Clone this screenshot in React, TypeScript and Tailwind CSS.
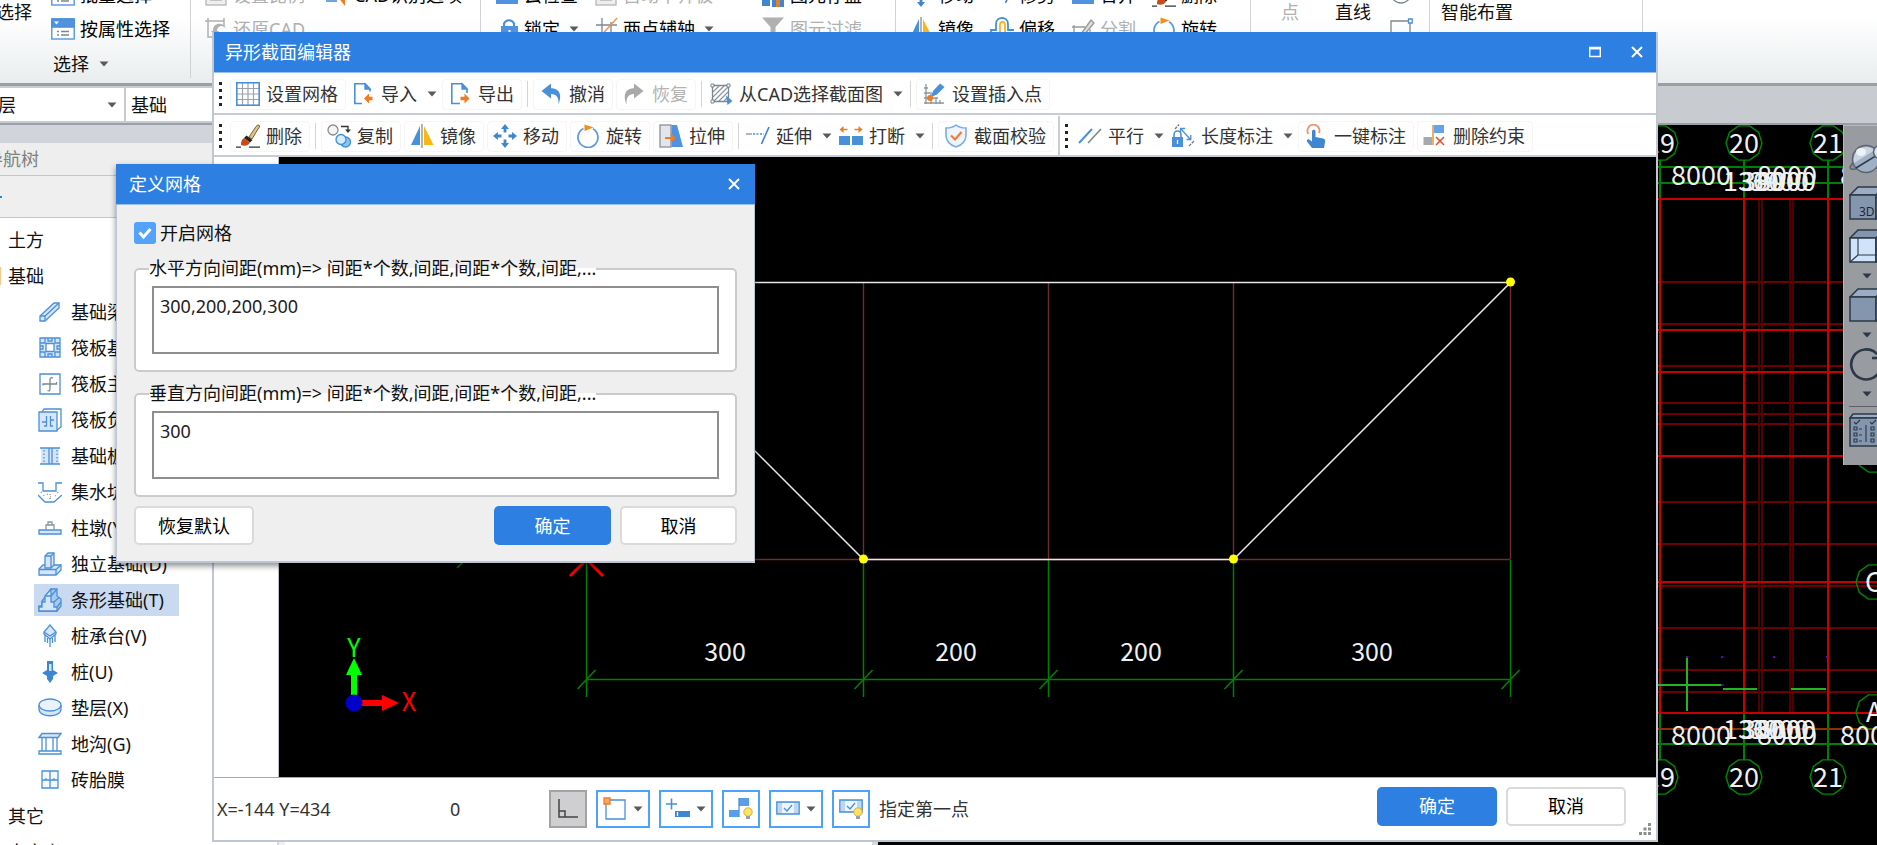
import React from "react";

type Kids = { children?: React.ReactNode };

const BLUE = "#4a90d9";
const ORANGE = "#f07c22";

function Caret({ color = "#5a5a5a" }: { color?: string }) {
  return (
    <svg width="10" height="6" viewBox="0 0 10 6" className="shrink-0" aria-hidden="true">
      <path d="M0.5 0.5H9.5L5 5.5Z" fill={color} />
    </svg>
  );
}

function Ico({ children, size = 24 }: Kids & { size?: number }) {
  return (
    <svg
      width={size}
      height={size}
      viewBox="0 0 24 24"
      fill="none"
      stroke={BLUE}
      strokeWidth="1.3"
      className="shrink-0"
      aria-hidden="true"
    >
      {children}
    </svg>
  );
}

/* ---------- icons ---------- */

const GridIcon = () => (
  <Ico>
    <path d="M6.5 1V23M12 1V23M17.5 1V23M1 6.5H23M1 12H23M1 17.5H23" stroke="#9aa3ad" strokeWidth="1.2" />
    <rect x="0.8" y="0.8" width="22.4" height="22.4" strokeWidth="1.6" />
  </Ico>
);
const ImportIcon = () => (
  <Ico>
    <path d="M11 21.5H3.8V1.8H14L19 7V9.5" strokeWidth="1.6" />
    <path d="M14 1.8V7H19Z" fill={BLUE} />
    <path d="M13 16.5L18 11.5V14.8H21.5V18.2H18V21.5Z" fill={ORANGE} stroke="none" />
  </Ico>
);
const ExportIcon = () => (
  <Ico>
    <path d="M12 21.5H3.8V1.8H14L19 7V11" strokeWidth="1.6" />
    <path d="M14 1.8V7H19Z" fill={BLUE} />
    <path d="M21.5 16.5L16.5 11.5V14.8H12.5V18.2H16.5V21.5Z" fill={ORANGE} stroke="none" />
  </Ico>
);
const UndoIcon = () => (
  <Ico>
    <path d="M2.5 9L12 1.5V6.2C19 6.2 24 11 19.5 22.5C20 15.5 17.5 12 12 12V16.5Z" fill={BLUE} stroke="none" />
  </Ico>
);
const RedoIcon = () => (
  <Ico>
    <path d="M21.5 9L12 1.5V6.2C5 6.2 0 11 4.5 22.5C4 15.5 6.5 12 12 12V16.5Z" fill="#a9a9a9" stroke="none" />
  </Ico>
);
const HatchIcon = () => (
  <Ico>
    <path d="M4 10L10 4M4 15L15 4M5 19L19 5M10 19L19 10M15 19L19 15" stroke="#8b959f" strokeWidth="1.2" />
    <path d="M3.5 3.5H19.5V19.5H3.5Z" stroke="#7b8792" />
    <path d="M2 2H5V5H2ZM18 2H21V5H18ZM2 18H5V21H2Z" fill="#fff" stroke="#7b8792" strokeWidth="1" />
    <path d="M17 13.5L23.5 19L18.5 23Z" fill={BLUE} stroke="none" />
  </Ico>
);
const InsertPointIcon = () => (
  <Ico>
    <path d="M4 2V22M9 10V22M14 16V22M18 18V22M2 6H6M2 11H8M2 16H16M2 21H22" stroke="#8b959f" />
    <path d="M9 15L11 9L18 1.5L22.5 5L15 12.5Z" fill={BLUE} stroke="none" />
    <circle cx="8" cy="16" r="3" fill={ORANGE} stroke="none" />
  </Ico>
);
const BrushIcon = () => (
  <Ico>
    <path d="M13 13L20 2.5Q22 0 23.5 1.5Q24 3 22 5L16 15Z" fill="#dcc48b" stroke="#7d6332" strokeWidth="1" />
    <path d="M10.5 11.5L16.5 16L14 18.5L8 14Z" fill="#222" stroke="none" />
    <path d="M8 14L14 18.5C12 22 8 22.5 5 21C5 18 5.5 15.5 8 14Z" fill="#c94a17" stroke="none" />
    <path d="M0 23.2H5M13 23.2H24" stroke="#333" />
  </Ico>
);
const CopyIcon = () => (
  <Ico>
    <circle cx="6" cy="6" r="5" stroke="#8b8b8b" fill="#f4f4f4" />
    <path d="M14 2.5H21V6" stroke="#333" />
    <path d="M18 5.5H24L21 9Z" fill="#333" stroke="none" />
    <circle cx="18.5" cy="18" r="5" stroke="#3a8fd6" fill="#8cc4ef" />
    <circle cx="14" cy="15.5" r="5" stroke="#3a8fd6" fill="#d7ecfb" />
  </Ico>
);
const MirrorIcon = () => (
  <Ico>
    <path d="M10 2V21H1Z" fill={BLUE} stroke="none" />
    <path d="M14 2V21H23.5Z" fill="#fbb515" stroke="none" />
    <path d="M12 0V24" stroke="#8b8b8b" />
  </Ico>
);
const MoveIcon = () => (
  <Ico>
    <path
      d="M12 0L16 5H13.4V8.5H10.6V5H8ZM12 24L8 19H10.6V15.5H13.4V19H16ZM0 12L5 8V10.6H8.5V13.4H5V16ZM24 12L19 16V13.4H15.5V10.6H19V8Z"
      fill="#3f86d2"
      stroke="none"
    />
  </Ico>
);
const RotateIcon = () => (
  <Ico>
    <path d="M7.5 4.5A10 10 0 1 0 17 4.8" stroke="#5c9de2" strokeWidth="1.8" />
    <path d="M8.5 0.5L17.5 3.5L8.5 7Z" fill="#f28c1e" stroke="none" />
  </Ico>
);
const StretchIcon = () => (
  <Ico>
    <rect x="1" y="1" width="11" height="22" fill="#e4e5ea" stroke="#8a8f98" />
    <path d="M12.5 1H18L24 23H12.5Z" fill="#4f93e0" stroke="none" />
    <path d="M6 14H15M12 10.5L15.5 14L12 17.5" stroke={ORANGE} strokeWidth="1.8" />
  </Ico>
);
const ExtendIcon = () => (
  <Ico>
    <path d="M0 10H6" stroke="#8b8b8b" />
    <path d="M7 10H18" strokeDasharray="2 1.5" />
    <path d="M15.5 20L23 3" stroke="#3f7fd0" strokeWidth="1.6" />
  </Ico>
);
const BreakIcon = () => (
  <Ico>
    <path d="M0 12H11V21H0ZM13 12H24V21H13Z" fill={BLUE} stroke="none" />
    <path d="M0.5 5.5L4.5 2V9ZM23.5 5.5L19.5 2V9Z" fill={ORANGE} stroke="none" />
    <path d="M4 5.5H8.5M20 5.5H15.5" stroke={ORANGE} strokeWidth="1.6" />
  </Ico>
);
const ShieldIcon = () => (
  <Ico>
    <path d="M12 1C15 3.5 18.5 4 22 4V11C22 17 18 21 12 23C6 21 2 17 2 11V4C5.5 4 9 3.5 12 1Z" fill="#eef5fd" stroke="#78aee6" strokeWidth="1.6" />
    <path d="M7 11.5L11 15.5L17.5 8" stroke="#f0793c" strokeWidth="2.2" />
  </Ico>
);
const ParallelIcon = () => (
  <Ico>
    <path d="M1 19L14 5" strokeWidth="2" />
    <path d="M10 19L23 5" stroke="#7d868f" strokeWidth="1.6" />
  </Ico>
);
const LengthIcon = () => (
  <Ico>
    <path d="M3 13V10.5A3.5 3.5 0 0 1 10 10.5V13" strokeWidth="1.6" />
    <path d="M1 13H12V23H1Z" fill={BLUE} stroke="none" />
    <path d="M6.5 16V20" stroke="#fff" />
    <path d="M10 5L19 15M9.5 9V4.5H14M15.5 15.5H19.8V11" />
    <path d="M4 5L8 0.5M18 22L23 17" stroke="#777" strokeDasharray="3 1" />
  </Ico>
);
const TouchIcon = () => (
  <Ico>
    <path d="M4.5 10A6 6 0 1 1 15 9" stroke="#f2926a" strokeWidth="1.8" />
    <path d="M8 7.5C8 5.3 11.5 5.3 11.5 7.5V13L19 14.5C21 15 21.5 16 21 18L20 24H8L3 17.5C2 15.5 4.5 14.5 6 16L8 17.5Z" fill="#3f86d2" stroke="none" />
  </Ico>
);
const RemoveConstraintIcon = () => (
  <Ico>
    <path d="M0.5 13H9V21H0.5Z" fill="#a4a8b0" stroke="none" />
    <path d="M11 1H21V9H11Z" fill="#64a3ea" stroke="none" />
    <path d="M10 1V21" stroke="#e89a3c" strokeWidth="1.6" />
    <path d="M13 13L21 21M21 13L13 21" stroke="#e0492c" strokeWidth="1.5" />
  </Ico>
);
const PropSelectIcon = () => (
  <Ico>
    <rect x="0.8" y="2" width="22.4" height="20" fill="#fff" />
    <path d="M0.8 2H23.2V10H0.8Z" fill="#4f93e0" />
    <path d="M3 4.5H8L5.5 7.5Z" fill="#fff" stroke="none" />
    <path d="M6 14.5H8M10 14.5H18M6 18H8M10 18H18" stroke="#7d868f" />
  </Ico>
);
const GrayBoxIcon = () => (
  <Ico>
    <rect x="2" y="2" width="20" height="20" stroke="#b5b5b5" fill="#eee" />
    <path d="M6 17H18M6 12H18" stroke="#b5b5b5" />
  </Ico>
);
const RestoreCadIcon = () => (
  <Ico>
    <path d="M4 1V20H23M1 4H20V9M20 1V4" stroke="#b0b0b0" strokeWidth="1.5" />
    <path d="M7 14L12 20L15 14H13C13 11 15 9 18 9L22 11C19 5 9 5 9 14Z" fill="#b0b0b0" stroke="none" />
  </Ico>
);
const ArrowIcon = () => (
  <Ico>
    <path d="M1 18H12" strokeWidth="1.6" />
    <path d="M12 13H20V23Z" fill={ORANGE} stroke="none" />
  </Ico>
);
const LockIcon = () => (
  <Ico>
    <path d="M9 10V6.5A5.5 5.5 0 0 1 19 6.5V10" strokeWidth="2" />
    <path d="M6 9H23V24H6Z" fill="#4f93e0" stroke="none" />
    <path d="M14.5 13V18" stroke="#fff" strokeWidth="2" />
  </Ico>
);
const AxisIcon = () => (
  <Ico>
    <path d="M8 1V23M17 5V23M2 8H23M2 17H23" stroke="#7d868f" />
    <path d="M4 22L23 1" stroke="#f0904c" />
  </Ico>
);
const FunnelIcon = () => (
  <Ico>
    <path d="M1 0.5H23L14.5 10V22H9.5V10Z" fill="#b0b0b0" stroke="none" />
  </Ico>
);
const SaveIcon = () => (
  <Ico>
    <path d="M1 16H9V23H1ZM11 12H23V24H11Z" fill="#3f86d2" stroke="none" />
    <path d="M15 16H19V24H15Z" fill={ORANGE} stroke="none" />
  </Ico>
);
const BarIcon = () => (
  <Ico>
    <path d="M1 17H23V21H1Z" fill="#4f93e0" stroke="none" />
  </Ico>
);
const OffsetIcon = () => (
  <Ico>
    <path d="M1 20V13H6V7C6 -1 18 -1 18 7V13H24" strokeWidth="1.8" />
    <path d="M5 21V17H10V8C10 4 15 4 15 8V17H22" stroke="#f6b32b" strokeWidth="1.8" />
  </Ico>
);
const SplitIcon = () => (
  <Ico>
    <path d="M3 8V22M1 10H14M3 17H23M19 12V22" stroke="#999" />
    <path d="M10 17L20 3L23 6L13 18Z" stroke="#999" fill="#ddd" />
  </Ico>
);
const RectIcon = () => (
  <Ico>
    <path d="M2 4H21V22H2Z" stroke="#7d868f" />
    <path d="M19.5 2H23.2V6H19.5Z" fill="#fff" />
  </Ico>
);
const CircleIcon = () => (
  <Ico>
    <circle cx="12" cy="10" r="10" stroke="#7d868f" />
  </Ico>
);

/* ---------- tree icons ---------- */

const LB = "#d6e6f8";
const BeamIcon = () => (
  <Ico>
    <path d="M2 16L16 3H21V8L7 21H2Z" fill={LB} />
    <path d="M2 16H7V21M7 16L21 3" />
  </Ico>
);
const RaftIcon = () => (
  <Ico>
    <path d="M2 2H22V21H2Z" fill={LB} />
    <path d="M8 7.5H16V15.5H8Z" fill="#fff" />
    <path d="M2 7H7V2M17 2V7H22M2 16H7V21M22 16H17V21M10 2V5H14V2M10 21V18H14V21M2 10H5V13H2M22 10H19V13H22" />
  </Ico>
);
const RaftMainIcon = () => (
  <Ico>
    <path d="M2 2H22V22H2Z" fill="#fff" />
    <path d="M5 13.5V12H18.5V10M15 6Q12 5 12 8V17Q12 19.5 9.5 18.5" stroke="#7b8792" />
  </Ico>
);
const RaftNegIcon = () => (
  <Ico>
    <path d="M4 4L6 1H23V19L19 22" />
    <path d="M1 4H19V23H1Z" fill={LB} />
    <path d="M8.5 8V18H6M12.5 8V18H15M4 14H8M13 12H16" />
  </Ico>
);
const StripIcon = () => (
  <Ico>
    <path d="M3 4H21V20H3Z" fill={LB} stroke="none" />
    <path d="M2 4H22M2 20H22M11 4V20M14 4V20" />
    <path d="M6 6V19M19 6V19" strokeDasharray="1.5 2" />
  </Ico>
);
const SumpIcon = () => (
  <Ico>
    <path d="M0 3H5V11H18V3H24M0 15L7 22H16L24 15" />
    <path d="M3 12L8 18M12 14V20M20 12L16 18M9 14L15 19" stroke="#8b959f" strokeDasharray="1 3" />
  </Ico>
);
const PierIcon = () => (
  <Ico>
    <path d="M1 14H23V18H1Z" fill={LB} />
    <path d="M8 14V9H16V14M10 9V6H14V9" stroke="#8b959f" />
  </Ico>
);
const FootingIcon = () => (
  <Ico>
    <path d="M1 17L5 13H23V18L18 23H1Z" fill={LB} />
    <path d="M1 17.5H18V23M18 17.5L23 13" />
    <path d="M7 16V4L10 1H16V13L13 16Z" fill={LB} />
    <path d="M7 4H13V16M13 4L16 1" />
  </Ico>
);
const StripFootingIcon = () => (
  <Ico>
    <path d="M1 23V18H4V13L13 1H19V8L23 11V18L19 23Z" fill="#a8caf0" />
    <path d="M1 23V19H4V14H7V8L13 1L13 8V14H16V19H19V23Z" fill={LB} />
    <path d="M7 8H13L19 1M16 14L21 9.5M19 19L23 14" />
  </Ico>
);
const PileCapIcon = () => (
  <Ico>
    <path d="M12 1L18 8V10L12 15L6 10V8Z" fill={LB} />
    <path d="M6 8L12 12L18 8M12 15V23M7 11V18M17 11V18M9.5 14V19M14.5 14V19" />
  </Ico>
);
const PileIcon = () => (
  <Ico>
    <path d="M9 1H15V10L20 13L15 16V19L12 23L9 19V16L4 13L9 10Z" fill="#3f86d2" stroke="none" />
    <path d="M11 4H13.5V11H11Z" fill={LB} stroke="none" />
  </Ico>
);
const PadIcon = () => (
  <Ico>
    <path d="M1 9V13C1 22 23 22 23 13V9" fill={LB} />
    <ellipse cx="12" cy="9" rx="11" ry="6" fill="#eaf2fc" />
  </Ico>
);
const TrenchIcon = () => (
  <Ico>
    <path d="M1 5.5L4 1.5H23L20 5.5Z" fill={LB} />
    <path d="M1 19H23V22H1ZM4 6V19M8 6V19M15 6V19M19 6V19" />
  </Ico>
);
const BrickIcon = () => (
  <Ico>
    <path d="M4 3H20V20H4Z" fill="#f4f9ff" />
    <path d="M12 3V20M4 12H20M8 10V12M16 10V12" />
  </Ico>
);

/* ---------- ribbon ---------- */

function RibbonItem({
  icon,
  label,
  disabled,
  caret,
}: {
  icon?: React.ReactNode;
  label: string;
  disabled?: boolean;
  caret?: boolean;
}) {
  return (
    <button
      type="button"
      disabled={disabled}
      className="flex h-[34px] shrink-0 items-center gap-[5px] whitespace-nowrap text-black disabled:text-[#b0b0b0]"
    >
      {icon}
      <span>{label}</span>
      {caret && (
        <span className="pl-1">
          <Caret />
        </span>
      )}
    </button>
  );
}

function RibbonCol({ children, className = "" }: Kids & { className?: string }) {
  return <div className={"-mt-[22px] flex flex-col items-start " + className}>{children}</div>;
}

function Ribbon() {
  return (
    <header className="flex h-[86px] shrink-0 items-start overflow-hidden border-b-[3px] border-[#9b9fa5] bg-linear-to-b from-white from-20% to-[#e9edee]">
      <div className="flex h-[78px] w-[191px] shrink-0 border-r border-[#cfd3d6]">
        <button type="button" className="-ml-1 mr-[19px] h-6 whitespace-nowrap">
          选择
        </button>
        <RibbonCol>
          <RibbonItem icon={<PropSelectIcon />} label="批量选择" />
          <RibbonItem icon={<PropSelectIcon />} label="按属性选择" />
          <button type="button" className="flex h-9 shrink-0 items-center gap-[10px] pl-[2px]">
            选择 <Caret />
          </button>
        </RibbonCol>
      </div>
      <div className="flex h-[78px] w-[290px] shrink-0 border-r border-[#cfd3d6] pl-[13px]">
        <RibbonCol className="w-[121px]">
          <RibbonItem icon={<GrayBoxIcon />} label="设置比例" disabled />
          <RibbonItem icon={<RestoreCadIcon />} label="还原CAD" disabled />
        </RibbonCol>
        <RibbonCol>
          <RibbonItem icon={<ArrowIcon />} label="CAD识别选项" />
        </RibbonCol>
      </div>
      <div className="flex h-[78px] w-[415px] shrink-0 border-r border-[#cfd3d6] pl-[14px]">
        <RibbonCol className="w-[99px]">
          <RibbonItem icon={<BarIcon />} label="云检查" />
          <RibbonItem icon={<LockIcon />} label="锁定" caret />
        </RibbonCol>
        <RibbonCol className="w-[167px]">
          <RibbonItem icon={<GrayBoxIcon />} label="自动平齐板" disabled />
          <RibbonItem icon={<AxisIcon />} label="两点辅轴" caret />
        </RibbonCol>
        <RibbonCol>
          <RibbonItem icon={<SaveIcon />} label="图元存盘" />
          <RibbonItem icon={<FunnelIcon />} label="图元过滤" disabled />
        </RibbonCol>
      </div>
      <div className="flex h-[78px] w-[355px] shrink-0 border-r border-[#cfd3d6] pl-[13px]">
        <RibbonCol className="w-[81px]">
          <RibbonItem icon={<MoveIcon />} label="移动" />
          <RibbonItem icon={<MirrorIcon />} label="镜像" />
        </RibbonCol>
        <RibbonCol className="w-[81px]">
          <RibbonItem icon={<ExtendIcon />} label="修剪" />
          <RibbonItem icon={<OffsetIcon />} label="偏移" />
        </RibbonCol>
        <RibbonCol className="w-[81px]">
          <RibbonItem icon={<BarIcon />} label="合并" />
          <RibbonItem icon={<SplitIcon />} label="分割" disabled />
        </RibbonCol>
        <RibbonCol>
          <RibbonItem icon={<BrushIcon />} label="删除" />
          <RibbonItem icon={<RotateIcon />} label="旋转" />
        </RibbonCol>
      </div>
      <div className="flex h-[78px] w-[179px] shrink-0 border-r border-[#cfd3d6] pl-[30px]">
        <button type="button" disabled className="h-6 w-[54px] text-left text-[#b0b0b0]">
          点
        </button>
        <button type="button" className="h-6 w-[54px] text-left">
          直线
        </button>
        <RibbonCol>
          <button type="button" aria-label="圆" className="flex h-[34px] items-center">
            <CircleIcon />
          </button>
          <button type="button" aria-label="矩形" className="flex h-[34px] items-center">
            <RectIcon />
          </button>
        </RibbonCol>
      </div>
      <div className="flex h-[78px] w-[213px] shrink-0 border-r border-[#cfd3d6] pl-[11px]">
        <button type="button" className="h-6 whitespace-nowrap">
          智能布置
        </button>
      </div>
    </header>
  );
}

/* ---------- navigation tree ---------- */

const treeItems: { label: string; icon: React.ReactNode; selected?: boolean }[] = [
  { label: "基础梁", icon: <BeamIcon /> },
  { label: "筏板基础", icon: <RaftIcon /> },
  { label: "筏板主筋", icon: <RaftMainIcon /> },
  { label: "筏板负筋", icon: <RaftNegIcon /> },
  { label: "基础板带", icon: <StripIcon /> },
  { label: "集水坑", icon: <SumpIcon /> },
  { label: "柱墩(Y)", icon: <PierIcon /> },
  { label: "独立基础(D)", icon: <FootingIcon /> },
  { label: "条形基础(T)", icon: <StripFootingIcon />, selected: true },
  { label: "桩承台(V)", icon: <PileCapIcon /> },
  { label: "桩(U)", icon: <PileIcon /> },
  { label: "垫层(X)", icon: <PadIcon /> },
  { label: "地沟(G)", icon: <TrenchIcon /> },
  { label: "砖胎膜", icon: <BrickIcon /> },
];

function NavTree() {
  return (
    <nav className="flex w-[279px] shrink-0 flex-col overflow-hidden border-r-2 border-[#d5d8dc] bg-white">
      <div className="h-[18px] shrink-0 bg-[#d1d4da]" />
      <h2 className="-ml-[15px] flex h-8 shrink-0 items-center bg-[#eeeeee] text-[#808080]">导航树</h2>
      <div className="flex h-[43px] shrink-0 items-center border-y border-[#c3c6ca] bg-[#efefef]">
        <span className="h-[2px] w-[2px] bg-[#2d7fe1]" />
      </div>
      <ul className="pt-1">
        <li className="flex h-9 items-center pl-2">土方</li>
        <li className="flex h-9 items-center">
          <span className="h-[18px] w-px bg-[#f5c98b]" />
          <span className="pl-[7px]">基础</span>
        </li>
        {treeItems.map((t) => (
          <li key={t.label} className="flex h-9 items-center pl-[34px]">
            <button
              type="button"
              className={
                "flex h-8 items-center gap-[9px] whitespace-nowrap pl-1 " +
                (t.selected ? "w-[145px] bg-[#c9d9ef]" : "")
              }
            >
              {t.icon}
              {t.label}
            </button>
          </li>
        ))}
        <li className="flex h-9 items-center pl-2">其它</li>
        <li className="flex h-9 items-center pl-2">自定义</li>
      </ul>
    </nav>
  );
}

/* ---------- plan view ---------- */

const axes = [
  { x: 1660, n: "19" },
  { x: 1744, n: "20" },
  { x: 1828, n: "21" },
];
const dimYs = [282, 324, 366, 403, 414, 424, 502, 544, 586, 628, 670, 692];
const brightYs = [199, 330, 372, 456, 582, 713];

function Bubble({ x, y, r = 18 }: { x: number; y: number; r?: number }) {
  const pts = Array.from({ length: 10 }, (_, i) => {
    const a = (i * Math.PI) / 5;
    return `${(x + r * Math.cos(a)).toFixed(1)},${(y + r * Math.sin(a)).toFixed(1)}`;
  }).join(" ");
  return <polygon points={pts} stroke="#008a00" strokeWidth="1.4" fill="none" />;
}

function PlanView() {
  return (
    <svg
      className="absolute inset-0 h-full w-full"
      viewBox="878 125 999 720"
      preserveAspectRatio="xMaxYMin slice"
      aria-label="轴网平面"
    >
      <g stroke="#008000" strokeWidth="2">
        <path d="M1640 167H1843M1640 183H1843M1640 744H1877" />
        <path d="M1660 160V199M1744 160V199M1828 160V199M1660 713V760M1744 713V760M1828 713V760" />
      </g>
      <path d="M1640 729H1877" stroke="#8a3300" strokeWidth="2" />
      <g stroke="#6e0000" strokeWidth="2">
        {dimYs.map((y) => (
          <path key={y} d={`M1640 ${y}H1877`} />
        ))}
      </g>
      <path d="M1759 199V713M1762 199V713M1790 199V713M1793 199V713" stroke="#500000" strokeWidth="2" />
      <g stroke="#c80000" strokeWidth="2">
        {brightYs.map((y) => (
          <path key={y} d={`M1640 ${y}H1877`} />
        ))}
        {axes.map((a) => (
          <path key={a.x} d={`M${a.x} 199V713`} />
        ))}
      </g>
      <g stroke="#22b422" strokeWidth="2">
        <path d="M1640 685H1721M1687 658V711M1723 689H1757M1791 689H1826" />
      </g>
      <path d="M1686 657H1688M1721 657H1723M1773 657H1775M1826 657H1828M1721 685H1723" stroke="#6a00c8" strokeWidth="2" />
      {axes.map((a) => (
        <g key={a.n}>
          <Bubble x={a.x} y={143} />
          <Bubble x={a.x} y={777} />
        </g>
      ))}
      <Bubble x={1874} y={455} />
      <Bubble x={1874} y={582} />
      <Bubble x={1874} y={712} />
      <g fill="#f0f0f0" className="text-[27px] [font-family:'Noto_Sans_CJK_SC',sans-serif]">
        {axes.map((a) => (
          <React.Fragment key={a.n}>
            <text x={a.x} y={153} textAnchor="middle">
              {a.n}
            </text>
            <text x={a.x} y={787} textAnchor="middle">
              {a.n}
            </text>
          </React.Fragment>
        ))}
        <text x={1671} y={185}>8000</text>
        <text x={1757} y={185}>8000</text>
        <text x={1840} y={185}>8000</text>
        <text x={1723} y={191}>1300</text>
        <text x={1741} y={191}>3800</text>
        <text x={1749} y={191}>3900</text>
        <text x={1756} y={191}>3000</text>
        <text x={1671} y={745}>8000</text>
        <text x={1757} y={745}>8000</text>
        <text x={1840} y={745}>8000</text>
        <text x={1723} y={739}>1300</text>
        <text x={1741} y={739}>3800</text>
        <text x={1749} y={739}>3900</text>
        <text x={1756} y={739}>3000</text>
        <text x={1865} y={592}>C</text>
        <text x={1866} y={722}>A</text>
      </g>
    </svg>
  );
}

function ViewButton({ label, children }: Kids & { label: string }) {
  return (
    <button type="button" aria-label={label} className="block h-[34px] overflow-hidden">
      <svg width="44" height="34" viewBox="0 0 44 34" fill="#8496ad" stroke="#2c3848" strokeWidth="1.5" aria-hidden="true">
        {children}
      </svg>
    </button>
  );
}

function ViewCaret() {
  return (
    <span className="flex h-[25px] items-center pl-[13px]">
      <Caret color="#2c3848" />
    </span>
  );
}

function ViewBar() {
  return (
    <div className="absolute right-0 top-0 flex h-[340px] w-[34px] flex-col items-start overflow-hidden border-l border-t border-[#b5b8bc] bg-[#989b9f] pl-[5px] pt-[17px]">
      <ViewButton label="三维观察">
        <path d="M5 18L1 24Q1 27 6 26L12 24" fill="#8b929b" stroke="#5b6470" />
        <circle cx="17" cy="16" r="13.5" fill="#9fb0c5" stroke="#5b6470" />
        <path d="M5 20A13 13 0 0 1 26 7Z" fill="#c9d5e3" stroke="none" />
        <ellipse cx="12" cy="9" rx="5" ry="4" fill="#eef3f8" stroke="none" />
        <path d="M7 25L30 11" />
        <circle cx="31" cy="9" r="6.5" fill="#dbe3ec" stroke="#5b6470" />
      </ViewButton>
      <span className="h-[9px]" />
      <ViewButton label="三维">
        <path d="M1 9L9 1H36L27 9Z" fill="#9badc2" />
        <path d="M1 9H27V33H1Z" />
        <path d="M27 9L36 1V25L27 33Z" />
        <text x="10" y="30" className="text-[12px]" fill="#1d2733" stroke="none">
          3D
        </text>
      </ViewButton>
      <span className="h-[9px]" />
      <ViewButton label="线框">
        <path d="M1 9L9 1H36L27 9Z" />
        <path d="M1 9H27V33H1Z" fill="#cfe4fb" />
        <path d="M27 9L36 1V25L27 33Z" fill="#cfe4fb" />
        <path d="M9 9V26H36M9 26L1 33M27 9V33" fill="none" strokeWidth="1.1" />
      </ViewButton>
      <ViewCaret />
      <ViewButton label="实体">
        <path d="M1 9L9 1H36L27 9Z" fill="#9badc2" />
        <path d="M1 9H27V33H1Z" />
        <path d="M27 9L36 1V25L27 33Z" />
      </ViewButton>
      <ViewCaret />
      <ViewButton label="旋转视图">
        <path d="M28 7A15 15 0 1 0 32 20" fill="none" strokeWidth="2.6" />
        <path d="M23 11H31V3" fill="none" strokeWidth="2.4" />
      </ViewButton>
      <ViewCaret />
      <span className="mb-[6px] h-px w-full bg-[#5c6066]" />
      <ViewButton label="显示设置">
        <path d="M1 5L4 1H40V5Z" fill="#9badc2" />
        <path d="M1 5H40V33H1Z" />
        <path
          d="M5 9L7 11L11 7M5 14H8V17H5ZM5 20H8V23H5ZM5 26H8V29H5ZM10 16H13M10 22H13M10 28H13M17 12V29M21 9L23 11L27 7M22 14H25V17H22ZM22 20H25V23H22ZM22 26H25V29H22Z"
          fill="none"
          strokeWidth="1.1"
        />
      </ViewButton>
    </div>
  );
}

/* ---------- section editor ---------- */

function Tool({ icon, label, disabled }: { icon: React.ReactNode; label: string; disabled?: boolean }) {
  return (
    <button
      type="button"
      disabled={disabled}
      className="flex h-[31px] items-center gap-[6px] whitespace-nowrap rounded border border-[#f5f5f5] pl-[5px] pr-[7px] text-[#333] disabled:text-[#b3b3b3]"
    >
      {icon}
      {label}
    </button>
  );
}

function DropTool({ icon, label }: { icon: React.ReactNode; label: string }) {
  return (
    <button type="button" className="flex h-[31px] items-center gap-[6px] whitespace-nowrap px-[2px] text-[#333]">
      {icon}
      {label}
      <span className="pl-1">
        <Caret />
      </span>
    </button>
  );
}

const Sep = () => <span className="mx-[2px] h-[26px] w-px bg-[#d4d4d4]" />;

function Grip() {
  return (
    <span className="mx-[5px] flex flex-col gap-[4px]">
      <i className="h-[3px] w-[3px] bg-[#222]" />
      <i className="h-[3px] w-[3px] bg-[#222]" />
      <i className="h-[3px] w-[3px] bg-[#222]" />
      <i className="h-[3px] w-[3px] bg-[#222]" />
    </span>
  );
}

const stations = [586.5, 863.5, 1048.5, 1233.5, 1510.5];
const spans = [
  { x: 725, t: "300" },
  { x: 956, t: "200" },
  { x: 1141, t: "200" },
  { x: 1372, t: "300" },
];

function SectionCanvas() {
  return (
    <svg className="absolute inset-0 h-full w-full" viewBox="279 157 1377 620" preserveAspectRatio="xMidYMid slice" aria-label="截面图">
      <g stroke="#6e2c2c" strokeWidth="1.4">
        <path d="M586.5 559.5H1510.5" />
        {stations.map((x) => (
          <path key={x} d={`M${x} 282V559`} />
        ))}
      </g>
      <g stroke="#008000" strokeWidth="1.5">
        <path d="M586.5 679.5H1510.5M457 568L475 550" />
        {stations.map((x) => (
          <path key={x} d={`M${x} 560V697M${x - 9} 689L${x + 9} 670`} />
        ))}
      </g>
      <path d="M586.5 282.5H1510.5L1233.5 559.5H863.5Z" fill="none" stroke="#e8e8e8" strokeWidth="1.5" />
      <path d="M570 576L603 543M603 576L570 543" stroke="#f00000" strokeWidth="3" />
      <g fill="#ffff00">
        <circle cx="863.5" cy="559" r="4.5" />
        <circle cx="1233.5" cy="559" r="4.5" />
        <circle cx="1510.5" cy="282" r="4.5" />
      </g>
      <g fill="#f0f0f0" textAnchor="middle" className="text-[25px] [font-family:'Noto_Sans_CJK_SC',sans-serif]">
        {spans.map((s) => (
          <text key={s.x} x={s.x} y={661}>
            {s.t}
          </text>
        ))}
        <text x="354" y="657" fill="#00ff00">
          Y
        </text>
        <text x="409" y="711" fill="#ff0000">
          X
        </text>
      </g>
      <path d="M351 703V675H346L354 658L362 675H357V703Z" fill="#00ff00" />
      <path d="M354 700H382V695L399 703L382 711V706H354Z" fill="#ff0000" />
      <circle cx="354" cy="703" r="8.5" fill="#0000c8" />
    </svg>
  );
}

function StatusButton({ label, children, caret, active }: Kids & { label: string; caret?: boolean; active?: boolean }) {
  return (
    <button
      type="button"
      aria-label={label}
      className={
        "flex h-[38px] items-center gap-[6px] border-2 px-[5px] " +
        (active ? "border-[#a3a3a3] bg-[#cfcfd1]" : "border-[#4ba3fb] bg-white")
      }
    >
      <Ico>{children}</Ico>
      {caret && <Caret />}
    </button>
  );
}

const Bulb = () => (
  <>
    <circle cx="19" cy="15" r="4.2" fill="#fde36b" stroke="#e0ae25" strokeWidth="1" />
    <path d="M17 19H21V22H17Z" fill="#9aa0a6" stroke="none" />
  </>
);

const primaryBtn = "h-[39px] rounded-[5px] bg-[#2d7fe1] text-white";
const plainBtn = "h-[39px] rounded-[5px] border-2 border-[#dadada] bg-white text-black";

function SectionEditor() {
  return (
    <section className="absolute bottom-[3px] left-[212px] right-[219px] top-8 flex flex-col overflow-hidden border-x-2 border-b-2 border-[#c0c7d3] bg-white">
      <div className="-mx-[2px] flex h-[41px] shrink-0 items-center border-b border-[#9cbfe9] bg-[#2d7fe1] pl-[13px] pr-[15px] text-white">
        <h1 className="flex-1">异形截面编辑器</h1>
        <button type="button" aria-label="最大化" className="mr-[30px]">
          <svg width="12" height="12" viewBox="0 0 12 12" aria-hidden="true">
            <path d="M0.7 1.5H11.3V10.5H0.7Z" fill="none" stroke="#fff" strokeWidth="1.4" />
            <path d="M0 1H12V3.5H0Z" fill="#fff" />
          </svg>
        </button>
        <button type="button" aria-label="关闭编辑器">
          <svg width="12" height="12" viewBox="0 0 12 12" aria-hidden="true">
            <path d="M1 1L11 11M11 1L1 11" stroke="#fff" strokeWidth="2" />
          </svg>
        </button>
      </div>
      <div className="flex h-[42px] shrink-0 items-center gap-[3px] border-b-2 border-[#c8ccd3] pt-[2px]">
        <Grip />
        <Tool icon={<GridIcon />} label="设置网格" />
        <DropTool icon={<ImportIcon />} label="导入" />
        <Tool icon={<ExportIcon />} label="导出" />
        <Sep />
        <Tool icon={<UndoIcon />} label="撤消" />
        <Tool icon={<RedoIcon />} label="恢复" disabled />
        <Sep />
        <DropTool icon={<HatchIcon />} label="从CAD选择截面图" />
        <Sep />
        <Tool icon={<InsertPointIcon />} label="设置插入点" />
      </div>
      <div className="flex h-[42px] shrink-0 items-center border-b-2 border-[#c8ccd3] pt-[2px]">
        <div className="flex items-center gap-[3px]">
          <Grip />
          <Tool icon={<BrushIcon />} label="删除" />
          <Sep />
          <Tool icon={<CopyIcon />} label="复制" />
          <Tool icon={<MirrorIcon />} label="镜像" />
          <Tool icon={<MoveIcon />} label="移动" />
          <Tool icon={<RotateIcon />} label="旋转" />
          <Tool icon={<StretchIcon />} label="拉伸" />
          <Sep />
          <DropTool icon={<ExtendIcon />} label="延伸" />
          <DropTool icon={<BreakIcon />} label="打断" />
          <Sep />
          <Tool icon={<ShieldIcon />} label="截面校验" />
        </div>
        <span className="ml-[4px] h-10 w-[2px] bg-[#c8ccd3]" />
        <div className="flex items-center gap-[3px]">
          <Grip />
          <DropTool icon={<ParallelIcon />} label="平行" />
          <DropTool icon={<LengthIcon />} label="长度标注" />
          <Tool icon={<TouchIcon />} label="一键标注" />
          <Tool icon={<RemoveConstraintIcon />} label="删除约束" />
        </div>
      </div>
      <div className="flex min-h-0 flex-1 border-b border-[#a8a8a8]">
        <div className="w-[65px] shrink-0 border-r border-[#bbbfc6]" />
        <div className="relative flex-1 overflow-hidden bg-black">
          <SectionCanvas />
        </div>
      </div>
      <footer className="relative flex h-[62px] shrink-0 items-center pl-[3px] pr-[30px] text-[#333]">
        <span className="w-[233px]">X=-144 Y=434</span>
        <span className="w-[99px]">0</span>
        <div className="flex gap-[9px]">
          <StatusButton label="正交" active>
            <path d="M3 2V20H22M3 14H9V20" stroke="#444" strokeWidth="1.5" />
          </StatusButton>
          <StatusButton label="对象捕捉" caret>
            <path d="M3 3H22V22H3Z" />
            <path d="M1 1H7V7H1Z" fill="#f8a56c" stroke={ORANGE} />
          </StatusButton>
          <StatusButton label="动态输入" caret>
            <path d="M0 7H11M5.5 1.5V12.5" strokeWidth="1.6" />
            <path d="M9 14H24V20H9Z" fill="#3f86d2" stroke="none" />
            <path d="M11.5 15V19" stroke="#fff" />
          </StatusButton>
          <StatusButton label="约束显示">
            <path d="M0 13H10V20H0ZM10 1H20V9H10Z" fill="#5a9de8" stroke="none" />
            <path d="M10 1V20" />
            <Bulb />
          </StatusButton>
          <StatusButton label="尺寸检查" caret>
            <path d="M0.8 5H23.2V17H0.8Z" fill="#bcd7f5" />
            <path d="M6 6H18V16H6Z" fill="#eef5fd" stroke="none" />
            <path d="M8 11L11 14L16 8" />
          </StatusButton>
          <StatusButton label="检查提示">
            <path d="M0.8 3H23.2V15H0.8Z" fill="#bcd7f5" />
            <path d="M6 4H18V14H6Z" fill="#eef5fd" stroke="none" />
            <path d="M8 9L11 12L16 6" />
            <Bulb />
          </StatusButton>
        </div>
        <span className="ml-[9px] flex-1">指定第一点</span>
        <div className="flex gap-[9px] pb-[6px]">
          <button type="button" className={primaryBtn + " w-[120px]"}>
            确定
          </button>
          <button type="button" className={plainBtn + " w-[120px]"}>
            取消
          </button>
        </div>
        <svg className="absolute bottom-1 right-1" width="14" height="14" viewBox="0 0 14 14" fill="#8a8e94" aria-hidden="true">
          <path d="M10 1H13V4H10ZM5.5 5.5H8.5V8.5H5.5ZM10 5.5H13V8.5H10ZM1 10H4V13H1ZM5.5 10H8.5V13H5.5ZM10 10H13V13H10Z" />
        </svg>
      </footer>
    </section>
  );
}

/* ---------- grid dialog ---------- */

function SpacingField({ id, legend, value }: { id: string; legend: string; value: string }) {
  return (
    <fieldset className="relative rounded-[5px] border-2 border-[#cbcbcb] bg-white px-4 py-4">
      <label
        htmlFor={id}
        className="absolute -top-4 left-[13px] whitespace-nowrap bg-linear-to-b from-[#efefef] from-50% to-white to-50% leading-7"
      >
        {legend}
      </label>
      <textarea
        id={id}
        defaultValue={value}
        className="block h-[68px] w-full resize-none border-2 border-[#8e8e8e] bg-white px-[6px] py-1 leading-7 text-[#222] outline-none"
      />
    </fieldset>
  );
}

function GridDialog() {
  return (
    <section
      role="dialog"
      aria-label="定义网格"
      className="absolute left-[116px] top-[164px] w-[639px] border-x border-b-2 border-[#bcc5d5] bg-[#efefef] shadow-[0_3px_6px_rgba(0,0,0,0.45)]"
    >
      <div className="-mx-px flex h-[41px] items-center border-b border-[#9cbfe9] bg-[#2d7fe1] pl-[13px] pr-[15px] text-white">
        <h2 className="flex-1">定义网格</h2>
        <button type="button" aria-label="关闭">
          <svg width="12" height="12" viewBox="0 0 12 12" aria-hidden="true">
            <path d="M1 1L11 11M11 1L1 11" stroke="#fff" strokeWidth="2" />
          </svg>
        </button>
      </div>
      <div className="flex flex-col px-[17px] pb-4 pt-[14px]">
        <label className="flex h-7 items-center gap-1">
          <span className="relative flex h-[22px] w-[22px]">
            <input type="checkbox" defaultChecked className="peer h-[22px] w-[22px] appearance-none rounded-[3px] bg-[#55a2fb]" />
            <svg className="pointer-events-none absolute inset-0" width="22" height="22" viewBox="0 0 22 22" fill="none" aria-hidden="true">
              <path d="M5.5 10.5L9.5 15L16.5 7" stroke="#fff" strokeWidth="3" />
            </svg>
          </span>
          开启网格
        </label>
        <div className="flex flex-col gap-[21px] pt-[21px]">
          <SpacingField id="h-spacing" legend="水平方向间距(mm)=> 间距*个数,间距,间距*个数,间距,..." value="300,200,200,300" />
          <SpacingField id="v-spacing" legend="垂直方向间距(mm)=> 间距*个数,间距,间距*个数,间距,..." value="300" />
        </div>
        <div className="flex gap-[9px] pt-[9px]">
          <button type="button" className={plainBtn + " mr-auto w-[120px]"}>
            恢复默认
          </button>
          <button type="button" className={primaryBtn + " w-[117px]"}>
            确定
          </button>
          <button type="button" className={plainBtn + " w-[117px]"}>
            取消
          </button>
        </div>
      </div>
    </section>
  );
}

/* ---------- page ---------- */

export default function App() {
  return (
    <div className="relative flex h-screen w-full flex-col overflow-hidden bg-white text-[18px] leading-6 text-[#111] [font-family:'Noto_Sans','Noto_Sans_CJK_SC',sans-serif]">
      <Ribbon />
      <div className="flex h-[39px] shrink-0 items-center gap-[2px] border-b-2 border-[#9a9fa8] bg-[#c8cbcf]">
        <div className="relative flex w-[124px] items-center bg-white">
          <select aria-label="楼层" className="-ml-5 h-[33px] w-[144px] appearance-none bg-white outline-none">
            <option>首层</option>
          </select>
          <span className="pointer-events-none absolute right-[7px] flex">
            <Caret />
          </span>
        </div>
        <select aria-label="构件类别" className="h-[33px] w-[150px] appearance-none bg-white pl-[5px] outline-none">
          <option>基础</option>
        </select>
      </div>
      <main className="flex min-h-0 flex-1">
        <NavTree />
        <div className="w-[599px] shrink-0 border-x-[6px] border-l-[#eef0f2] border-r-[#d5d8dc] bg-white" />
        <div className="relative flex-1 overflow-hidden bg-black">
          <PlanView />
          <ViewBar />
        </div>
      </main>
      <SectionEditor />
      <GridDialog />
    </div>
  );
}
